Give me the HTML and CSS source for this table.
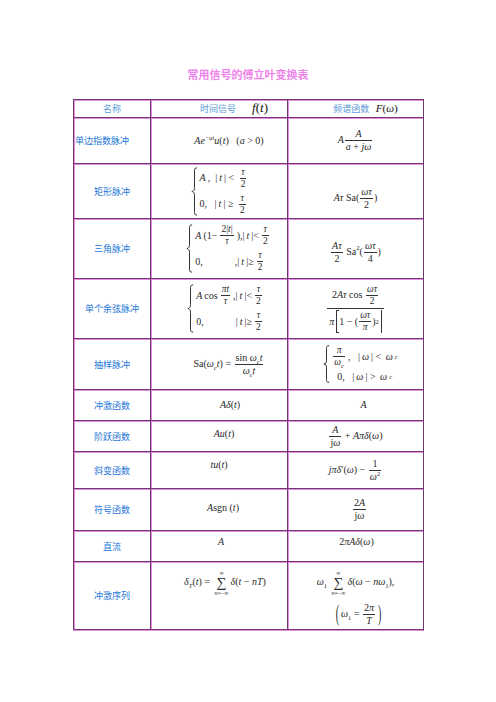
FILE: index.html
```html
<!DOCTYPE html>
<html lang="zh-CN">
<head>
<meta charset="utf-8">
<title>常用信号的傅立叶变换表</title>
<link rel="stylesheet" href="styles.css">
</head>
<body>
<h1 class="title">常用信号的傅立叶变换表</h1>
<table class="ft">
<colgroup><col class="c1"><col class="c2"><col class="c3"></colgroup>
<tr class="h-head">
  <td class="lbl lbl-head">名称</td>
  <td class="m off30"><span class="lbl-head">时间信号</span><span class="fsym"><i>f</i>(<i>t</i>)</span></td>
  <td class="m off20"><span class="lbl-head">频谱函数</span> <span class="Fsym"><i>F</i>(<i>ω</i>)</span></td>
</tr>
<tr class="h1">
  <td class="lbl lbl-left">单边指数脉冲</td>
  <td class="m off20"><i>Ae</i><sup><i>−at</i></sup><i>u</i>(<i>t</i>)&nbsp;&nbsp;&nbsp;(<i>a</i> &gt; 0)</td>
  <td class="m"><i>A</i><span class="frac"><span><i>A</i></span><span><i>a</i> + <i>jω</i></span></span></td>
</tr>
<tr class="h2">
  <td class="lbl">矩形脉冲</td>
  <td class="m">
    <span class="cases">
      <span class="brace"><svg viewBox="0 0 8 60" preserveAspectRatio="none"><path d="M7 1 C4 1 4 3 4 6 L4 25 C4 28 3 30 1 30 C3 30 4 32 4 35 L4 54 C4 57 4 59 7 59"/></svg></span>
      <span class="rows">
        <span><i>A</i>,&nbsp; |<i>t</i>| &lt; <span class="frac sm"><span><i>τ</i></span><span>2</span></span></span>
        <span>0,&nbsp;&nbsp; |<i>t</i>| ≥ <span class="frac sm"><span><i>τ</i></span><span>2</span></span></span>
      </span>
    </span>
  </td>
  <td class="m pt15"><i>A</i><i>τ</i> Sa(<span class="frac"><span><i>ωτ</i></span><span>2</span></span>)</td>
</tr>
<tr class="h3">
  <td class="lbl">三角脉冲</td>
  <td class="m off18">
    <span class="cases">
      <span class="brace"><svg viewBox="0 0 8 60" preserveAspectRatio="none"><path d="M7 1 C4 1 4 3 4 6 L4 25 C4 28 3 30 1 30 C3 30 4 32 4 35 L4 54 C4 57 4 59 7 59"/></svg></span>
      <span class="rows">
        <span><i>A</i>(1−<span class="frac sm"><span>2|<i>t</i>|</span><span><i>τ</i></span></span>),|<i>t</i>|&lt;<span class="frac sm"><span><i>τ</i></span><span>2</span></span></span>
        <span>0,<span class="sp30"></span>,|<i>t</i>|≥<span class="frac sm"><span><i>τ</i></span><span>2</span></span></span>
      </span>
    </span>
  </td>
  <td class="m pt8"><span class="frac"><span><i>A</i><i>τ</i></span><span>2</span></span> Sa<sup>2</sup>(<span class="frac"><span><i>ωτ</i></span><span>4</span></span>)</td>
</tr>
<tr class="h4">
  <td class="lbl">单个余弦脉冲</td>
  <td class="m off12">
    <span class="cases">
      <span class="brace"><svg viewBox="0 0 8 60" preserveAspectRatio="none"><path d="M7 1 C4 1 4 3 4 6 L4 25 C4 28 3 30 1 30 C3 30 4 32 4 35 L4 54 C4 57 4 59 7 59"/></svg></span>
      <span class="rows">
        <span><i>A</i>cos<span class="frac sm"><span><i>πt</i></span><span><i>τ</i></span></span>,|<i>t</i>|&lt;<span class="frac sm"><span><i>τ</i></span><span>2</span></span></span>
        <span>0,<span class="sp30"></span>|<i>t</i>|≥<span class="frac sm"><span><i>τ</i></span><span>2</span></span></span>
      </span>
    </span>
  </td>
  <td class="m">
    <span class="frac wide">
      <span>2<i>Aτ</i> cos <span class="frac sm"><span><i>ωτ</i></span><span>2</span></span></span>
      <span><i>π</i><span class="brk">1 − (<span class="frac sm"><span><i>ωτ</i></span><span><i>π</i></span></span>)<sup>2</sup></span></span>
    </span>
  </td>
</tr>
<tr class="h5">
  <td class="lbl">抽样脉冲</td>
  <td class="m off20">Sa(<i>ω</i><sub><i>c</i></sub><i>t</i>) = <span class="frac"><span>sin <i>ω</i><sub><i>c</i></sub><i>t</i></span><span><i>ω</i><sub><i>c</i></sub><i>t</i></span></span></td>
  <td class="m off10">
    <span class="cases">
      <span class="brace"><svg viewBox="0 0 8 60" preserveAspectRatio="none"><path d="M7 1 C4 1 4 3 4 6 L4 25 C4 28 3 30 1 30 C3 30 4 32 4 35 L4 54 C4 57 4 59 7 59"/></svg></span>
      <span class="rows">
        <span><span class="frac sm"><span><i>π</i></span><span><i>ω</i><sub><i>c</i></sub></span></span>,&nbsp;&nbsp; |<i>ω</i>| &lt; <i>ω</i><sub><i>c</i></sub></span>
        <span>&nbsp; 0,&nbsp;&nbsp; |<i>ω</i>| &gt; <i>ω</i><sub><i>c</i></sub></span>
      </span>
    </span>
  </td>
</tr>
<tr class="h6">
  <td class="lbl">冲激函数</td>
  <td class="m off22"><i>A</i><i>δ</i>(<i>t</i>)</td>
  <td class="m off16"><i>A</i></td>
</tr>
<tr class="h7">
  <td class="lbl">阶跃函数</td>
  <td class="m off10 up4"><i>Au</i>(<i>t</i>)</td>
  <td class="m"><span class="frac"><span><i>A</i></span><span>j<i>ω</i></span></span> + <i>Aπδ</i>(<i>ω</i>)</td>
</tr>
<tr class="h8">
  <td class="lbl">斜变函数</td>
  <td class="m up10"><i>tu</i>(<i>t</i>)</td>
  <td class="m"><i>jπδ</i>′(<i>ω</i>) − <span class="frac"><span>1</span><span><i>ω</i><sup>2</sup></span></span></td>
</tr>
<tr class="h9">
  <td class="lbl">符号函数</td>
  <td class="m off8 up4"><i>A</i>sgn (<i>t</i>)</td>
  <td class="m off8"><span class="frac"><span>2<i>A</i></span><span>j<i>ω</i></span></span></td>
</tr>
<tr class="h10">
  <td class="lbl">直流</td>
  <td class="m off4 up8"><i>A</i></td>
  <td class="m off2 up8">2<i>πA</i><i>δ</i>(<i>ω</i>)</td>
</tr>
<tr class="h11">
  <td class="lbl">冲激序列</td>
  <td class="m off12 top">
    <span class="line"><i>δ</i><sub><i>T</i></sub>(<i>t</i>) = <span class="sum"><span class="lim">∞</span><span class="sig">∑</span><span class="lim"><i>n</i>=−∞</span></span><i>δ</i>(<i>t</i> − <i>nT</i>)</span>
  </td>
  <td class="m top">
    <span class="line"><i>ω</i><sub>1</sub> <span class="sum"><span class="lim">∞</span><span class="sig">∑</span><span class="lim"><i>n</i>=−∞</span></span><i>δ</i>(<i>ω</i> − <i>nω</i><sub>1</sub>),</span>
    <span class="line second"><span class="bigp">(</span><i>ω</i><sub>1</sub> = <span class="frac"><span>2<i>π</i></span><span><i>T</i></span></span><span class="bigp">)</span></span>
  </td>
</tr>
</table>
</body>
</html>
```
FILE: styles.css
```css
html, body {
  margin: 0;
  padding: 0;
  background: #ffffff;
}
body {
  font-family: "Liberation Serif", "Times New Roman", serif;
  color: #2a2a2a;
}
.title {
  margin: 67px 0 0 0;
  height: 14px;
  line-height: 14px;
  text-align: center;
  font-family: "Noto Sans CJK SC", "Noto Sans", sans-serif;
  font-size: 11px;
  font-weight: bold;
  color: #ee84ea;
}
.ft {
  margin: 18px 0 0 73px;
  width: 350px;
  table-layout: fixed;
  border-collapse: separate;
  border-spacing: 0;
  border-right: 1px solid #6e3b6e;
  border-bottom: 1px solid #e58ae5;
}
.c1 { width: 77px; }
.c2 { width: 137px; }
.c3 { width: 136px; }
.ft td {
  box-sizing: border-box;
  padding: 0;
  border-top: 1px solid #6e3b6e;
  border-left: 1px solid #6e3b6e;
  box-shadow: inset 1px 1px 0 #e58ae5;
  vertical-align: middle;
  text-align: center;
  font-size: 10px;
  line-height: 12px;
  white-space: nowrap;
}
.ft tr:last-child td {
  border-bottom: 1px solid #6e3b6e;
}
.h-head { height: 18px; }
.h1 { height: 46px; }
.h2 { height: 55px; }
.h3 { height: 60px; }
.h4 { height: 60px; }
.h5 { height: 51px; }
.h6 { height: 31px; }
.h7 { height: 31px; }
.h8 { height: 37px; }
.h9 { height: 42px; }
.h10 { height: 31px; }
.h11 { height: 69px; }

.ft td.lbl {
  font-family: "Noto Sans CJK SC", "Noto Sans", sans-serif;
  font-size: 9px;
  line-height: 11px;
  color: #2576d9;
}
.ft td.lbl-left { text-align: left; padding-left: 1px; }
.ft .lbl-head,
.ft td.lbl-head {
  font-family: "Noto Sans CJK SC", "Noto Sans", sans-serif;
  font-size: 9px;
  color: #5e9ad8;
}
.fsym {
  font-size: 13px;
  margin-left: 16px;
  color: #111;
}
.Fsym {
  font-size: 11px;
  margin-left: 4px;
  color: #111;
}
i { font-style: italic; }
sup, sub { font-size: 6.5px; line-height: 0; }

.ft td.off2 { padding-left: 2px; }
.ft td.off4 { padding-left: 4px; }
.ft td.off8 { padding-left: 8px; }
.ft td.off10 { padding-left: 10px; }
.ft td.off12 { padding-left: 12px; }
.ft td.off16 { padding-left: 16px; }
.ft td.off18 { padding-left: 18px; }
.ft td.off20 { padding-left: 20px; }
.ft td.off22 { padding-left: 22px; }
.ft td.off30 { padding-left: 30px; }
.ft td.pt8 { padding-top: 8px; }
.ft td.pt15 { padding-top: 15px; }
.ft td.up4 { padding-bottom: 4px; }
.ft td.up8 { padding-bottom: 8px; }
.ft td.up10 { padding-bottom: 10px; }
.ft td.top { vertical-align: top; padding-top: 8px; }

.frac {
  display: inline-flex;
  flex-direction: column;
  align-items: stretch;
  vertical-align: middle;
  text-align: center;
  line-height: 12px;
  margin: 0 1px;
}
.frac > span { display: block; padding: 0 1px; }
.frac > span + span { border-top: 1px solid #333; }
.frac.sm { font-size: 9.5px; line-height: 11px; }
.frac.wide > span { padding: 1px 2px; }

.cases {
  display: inline-flex;
  align-items: stretch;
  vertical-align: middle;
  text-align: left;
}
.brace {
  position: relative;
  width: 7px;
  flex: none;
}
.brace svg {
  position: absolute;
  left: 0;
  top: 0;
  width: 100%;
  height: 100%;
}
.brace path {
  fill: none;
  stroke: #333;
  stroke-width: 1;
  vector-effect: non-scaling-stroke;
}
.rows {
  display: flex;
  flex-direction: column;
  gap: 3px;
  padding-left: 2px;
}
.rows > span {
  display: flex;
  align-items: center;
  gap: 2px;
  white-space: pre;
}
.sp30 { display: inline-block; width: 28px; }

.brk {
  display: inline-flex;
  align-items: center;
  border-left: 1px solid #333;
  border-right: 1px solid #333;
  padding: 0 2px;
  margin-left: 2px;
  position: relative;
}
.brk::before, .brk::after {
  content: "";
  position: absolute;
  left: 0;
  right: 0;
  height: 0;
  border-top: 1px solid #333;
}
.brk::before { top: 0; margin: 0 -1px; width: 3px; }
.brk::after { bottom: 0; margin: 0 -1px; width: 3px; }

.sum {
  display: inline-flex;
  flex-direction: column;
  align-items: center;
  vertical-align: middle;
  line-height: 1;
  margin: 0 2px;
}
.sum .lim { font-size: 6px; }
.sum .sig { font-size: 14px; }
.line { display: block; }
.line.second { margin-top: 6px; padding-left: 6px; }
.bigp {
  display: inline-block;
  transform: scaleY(2.4);
  font-size: 10px;
  margin: 0 2px;
}
```
